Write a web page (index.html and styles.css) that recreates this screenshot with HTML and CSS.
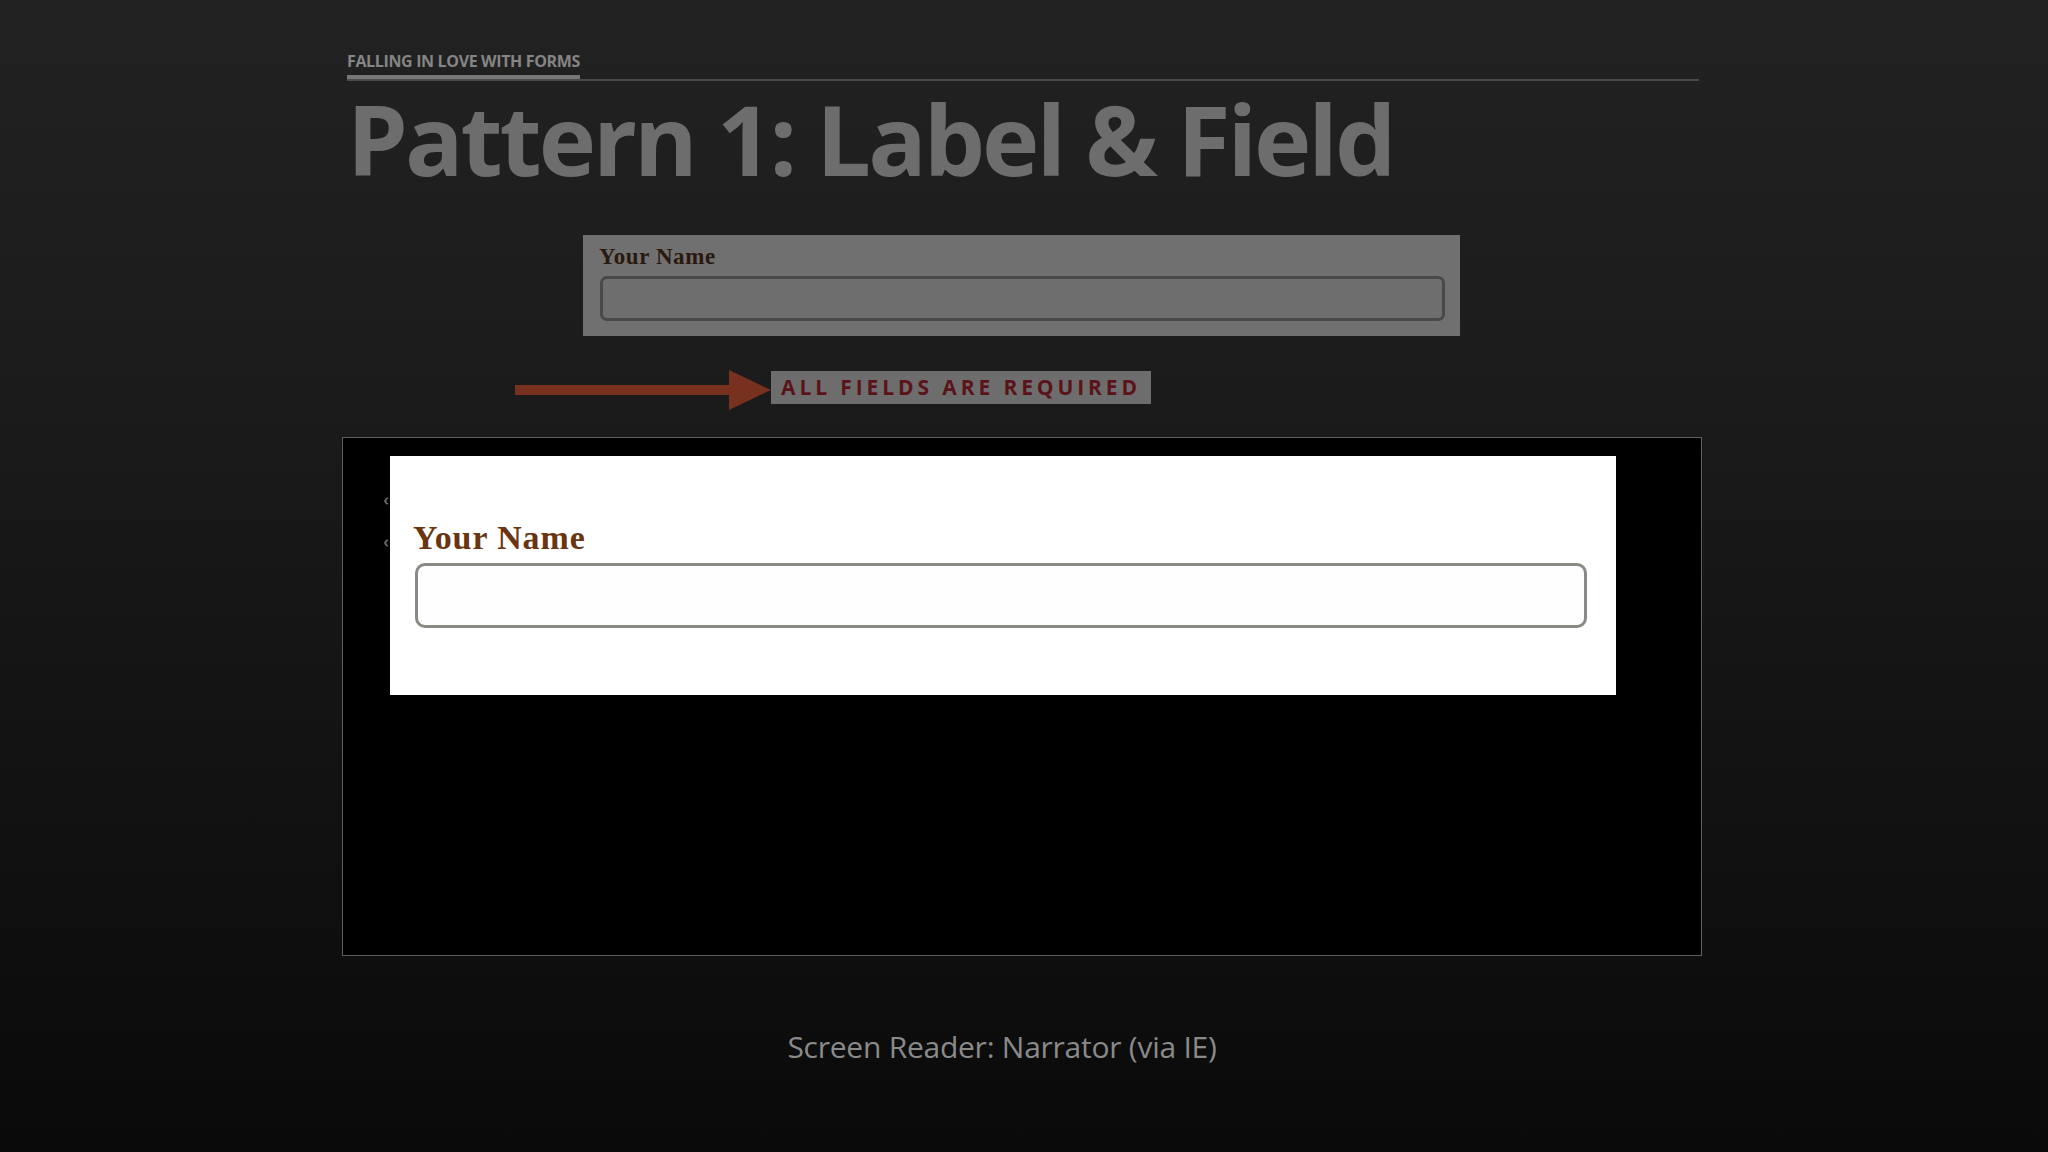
FILE: index.html
```html
<!DOCTYPE html>
<html lang="en">
<head>
<meta charset="utf-8">
<title>Pattern 1: Label &amp; Field</title>
<link rel="stylesheet" href="styles.css">
</head>
<body>
<div class="page">
  <div class="header">
    <span class="kicker">FALLING IN LOVE WITH FORMS</span>
  </div>
  <h1 class="title">Pattern 1: Label &amp; Field</h1>

  <div class="demo-box">
    <div class="demo-label">Your Name</div>
    <div class="demo-input"></div>
  </div>

  <div class="required-row">
    <svg class="arrow" width="256" height="40" viewBox="0 0 256 40">
      <rect x="0" y="15" width="218" height="10" fill="#78301f"/>
      <polygon points="214,0 256,20 214,40" fill="#78301f"/>
    </svg>
    <div class="required">ALL FIELDS ARE REQUIRED</div>
  </div>

  <div class="panel">
    <div class="sheet">
      <span class="mark mark-a"></span>
      <span class="mark mark-b"></span>
      <div class="sheet-label">Your Name</div>
      <div class="sheet-input"></div>
    </div>
  </div>

  <div class="caption">Screen Reader: Narrator (via IE)</div>
</div>
</body>
</html>
```

FILE: styles.css
```css
html, body {
  margin: 0;
  padding: 0;
  background: #0b0b0b;
}

.page {
  width: 2048px;
  height: 1152px;
  box-sizing: border-box;
  padding: 50px 0 0 347px;
  background: linear-gradient(180deg, #222222 0%, #1c1c1c 30%, #141414 60%, #0a0a0a 100%);
  display: flex;
  flex-direction: column;
  align-items: flex-start;
  overflow: hidden;
}

.header {
  width: 1352px;
  border-bottom: 2px solid #4b4b4b;
  height: 29px;
  display: flex;
  align-items: flex-start;
}

.kicker {
  font-family: "Open Sans", sans-serif;
  font-weight: 700;
  font-size: 16px;
  line-height: 22px;
  letter-spacing: -0.35px;
  color: #858585;
  height: 25px;
  border-bottom: 4px solid #777777;
  box-sizing: content-box;
}

.title {
  margin: 7px 0 0 0;
  font-family: "Open Sans", sans-serif;
  font-weight: 700;
  font-size: 97px;
  line-height: 100px;
  letter-spacing: -3px;
  color: #6d6d6d;
  white-space: nowrap;
}

.demo-box {
  margin: 47px 0 0 236px;
  width: 877px;
  height: 101px;
  box-sizing: border-box;
  padding: 9px 15px 0 16px;
  background: #717070;
}

.demo-label {
  font-family: "Liberation Serif", serif;
  font-weight: 700;
  font-size: 23px;
  line-height: 26px;
  letter-spacing: 0.6px;
  color: #2a190f;
}

.demo-input {
  margin: 6px 0 0 1px;
  height: 45px;
  box-sizing: border-box;
  border: 3px solid #4a4848;
  border-radius: 7px;
  background: #6f6e6e;
}

.required-row {
  margin: 34px 0 0 168px;
  display: flex;
  align-items: flex-start;
  height: 40px;
}

.arrow {
  display: block;
}

.required {
  margin-top: 1px;
  width: 380px;
  height: 33px;
  box-sizing: border-box;
  background: #6e6d6d;
  font-family: "Open Sans", sans-serif;
  font-weight: 700;
  font-size: 21px;
  line-height: 33px;
  letter-spacing: 3.9px;
  color: #5a1419;
  text-align: center;
  white-space: nowrap;
}

.panel {
  margin: 27px 0 0 -5px;
  width: 1360px;
  height: 519px;
  box-sizing: border-box;
  border: 1px solid #5e5e5e;
  background: #000000;
  padding: 18px 0 0 47px;
}

.sheet {
  position: relative;
  width: 1226px;
  height: 239px;
  box-sizing: border-box;
  background: #ffffff;
  padding: 62px 29px 0 23px;
}

.mark {
  position: absolute;
  left: -6px;
  width: 6px;
  height: 6px;
  border-left: 2px solid #6a6a6a;
  border-bottom: 2px solid #6a6a6a;
  border-radius: 0 0 0 4px;
  transform: rotate(45deg);
  box-sizing: border-box;
}

.mark-a { top: 42px; }
.mark-b { top: 84px; }

.sheet-label {
  font-family: "Liberation Serif", serif;
  font-weight: 700;
  font-size: 34px;
  line-height: 40px;
  letter-spacing: 0.9px;
  color: #6a3512;
}

.sheet-input {
  margin: 5px 0 0 2px;
  height: 65px;
  box-sizing: border-box;
  border: 3px solid #8a8a84;
  border-radius: 10px;
  background: #fefefe;
}

.caption {
  margin: 71px 0 0 0;
  width: 1310px;
  text-align: center;
  font-family: "Open Sans", sans-serif;
  font-weight: 400;
  font-size: 30px;
  line-height: 40px;
  letter-spacing: -0.25px;
  color: #8a8a8a;
}
```
